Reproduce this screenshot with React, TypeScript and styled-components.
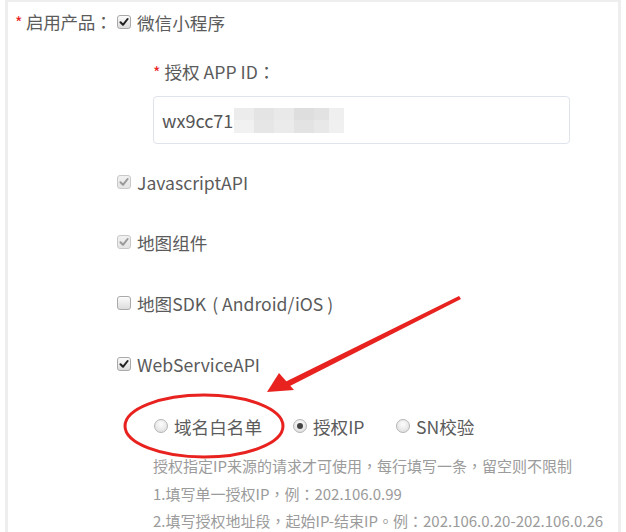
import React from "react";
import styled, { createGlobalStyle } from "styled-components";

const Global = createGlobalStyle`
  html, body { margin: 0; padding: 0; background: #fff; }
  body { font-family: "Noto Sans CJK SC", "Noto Sans", sans-serif; }
`;

const Frame = styled.div`
  position: relative;
  box-sizing: border-box;
  width: 616px;
  height: 532px;
  margin-left: 5px;
  border-style: solid;
  border-color: #eeeeee;
  border-width: 2px 3px 0 3px;
  overflow: hidden;
  padding-top: 8px;
  color: #5b5b5b;
  font-size: 17.6px;
`;

const FormRow = styled.div`
  display: flex;
  align-items: flex-start;
`;

const LabelCol = styled.div`
  width: 109px;
  flex: none;
  box-sizing: border-box;
  padding-left: 7px;
  height: 24px;
  line-height: 24px;
  white-space: nowrap;
  letter-spacing: -0.4px;
`;

const Star = styled.span`
  color: #e8231f;
  margin-right: 4px;
  font-size: 16px;
`;

const Punct = styled.span`
  font-family: "Noto Sans CJK TC", "Noto Sans CJK SC", sans-serif;
`;

const Paren = styled.span<{ $open?: boolean }>`
  margin: ${(p) => (p.$open ? "0 4px 0 6px" : "0 0 0 4px")};
`;

const ContentCol = styled.div`
  display: flex;
  flex-direction: column;
  flex: 1;
`;

const Sub = styled.div`
  padding-left: 36px;
  display: flex;
  flex-direction: column;
`;

const SubLabel = styled.div`
  margin-top: 26px;
  height: 24px;
  line-height: 24px;
  white-space: nowrap;
`;

const Input = styled.div`
  margin-top: 12px;
  box-sizing: border-box;
  width: 417px;
  height: 48px;
  border: 1px solid #dfe3eb;
  border-radius: 4px;
  display: flex;
  align-items: center;
  padding-left: 8px;
  color: #555;
  font-size: 18px;
`;

const Check = styled.label<{ $top: number }>`
  display: flex;
  align-items: center;
  height: 24px;
  margin-top: ${(p) => p.$top}px;
  gap: 6px;
  white-space: nowrap;
`;

const Box = styled.span<{ $disabled?: boolean }>`
  box-sizing: border-box;
  width: 14px;
  height: 14px;
  border-radius: 3px;
  border: 1px solid ${(p) => (p.$disabled ? "#c9c9c9" : "#a9a9a9")};
  background: ${(p) =>
    p.$disabled ? "linear-gradient(#f1f1f1, #e4e4e4)" : "linear-gradient(#fbfbfb, #dcdcdc)"};
  display: flex;
  align-items: center;
  justify-content: center;
  flex: none;
`;

const Radios = styled.div`
  display: flex;
  align-items: center;
  margin-top: 38px;
  padding-left: 37px;
  height: 24px;
`;

const RadioItem = styled.label<{ $w: number }>`
  display: flex;
  align-items: center;
  gap: 6px;
  width: ${(p) => p.$w}px;
  white-space: nowrap;
`;

const Dot = styled.span<{ $on?: boolean }>`
  box-sizing: border-box;
  width: 14px;
  height: 14px;
  border-radius: 50%;
  border: 1px solid #b5b5b5;
  background: radial-gradient(circle at 50% 35%, #fdfdfd, #d9d9d9);
  display: flex;
  align-items: center;
  justify-content: center;
  flex: none;
  &::after {
    content: "";
    display: ${(p) => (p.$on ? "block" : "none")};
    width: 6px;
    height: 6px;
    border-radius: 50%;
    background: #444;
  }
`;

const Help = styled.div`
  margin-top: 14px;
  padding-left: 36px;
  color: #9b9b9b;
  font-size: 15px;
  line-height: 27.5px;
  white-space: nowrap;
`;

const Overlay = styled.svg`
  position: absolute;
  left: -8px;
  top: -2px;
  pointer-events: none;
`;

const Mosaic = styled.svg`
  margin-left: 1px;
`;

const Tick = ({ light }: { light?: boolean }) => (
  <svg width="10" height="10" viewBox="0 0 10 10">
    <path
      d="M1.5 5.2 L4 7.8 L8.6 2"
      fill="none"
      stroke={light ? "#9a9a9a" : "#222"}
      strokeWidth="2"
      strokeLinecap="round"
      strokeLinejoin="round"
    />
  </svg>
);

const mosaic: [number, number, number, number, string][] = [
  [0, 0, 20, 12, "#ececec"],
  [20, 0, 20, 12, "#e4e4e4"],
  [40, 0, 20, 12, "#e9e9e9"],
  [60, 0, 20, 12, "#dedede"],
  [80, 0, 15, 12, "#e2e2e2"],
  [95, 0, 15, 12, "#efefef"],
  [0, 12, 20, 13, "#f1f1f1"],
  [20, 12, 20, 13, "#e6e6e6"],
  [40, 12, 20, 13, "#ebebeb"],
  [60, 12, 20, 13, "#e3e3e3"],
  [80, 12, 15, 13, "#e8e8e8"],
  [95, 12, 15, 13, "#f0f0f0"],
];

export default function App() {
  return (
    <>
      <Global />
      <Frame>
        <FormRow>
          <LabelCol>
            <Star>*</Star>启用产品<Punct>：</Punct>
          </LabelCol>
          <ContentCol>
            <Check $top={0}>
              <Box>
                <Tick />
              </Box>
              微信小程序
            </Check>
            <Sub>
              <SubLabel>
                <Star>*</Star>授权 APP ID<Punct>：</Punct>
              </SubLabel>
              <Input>
                wx9cc71
                <Mosaic width="110" height="25" viewBox="0 0 110 25">
                  {mosaic.map(([x, y, w, h, c], i) => (
                    <rect key={i} x={x} y={y} width={w} height={h} fill={c} />
                  ))}
                </Mosaic>
              </Input>
            </Sub>
            <Check $top={26}>
              <Box $disabled>
                <Tick light />
              </Box>
              JavascriptAPI
            </Check>
            <Check $top={36}>
              <Box $disabled>
                <Tick light />
              </Box>
              地图组件
            </Check>
            <Check $top={37}>
              <Box />
              <span>
                地图SDK<Paren $open>(</Paren>Android/iOS<Paren>)</Paren>
              </span>
            </Check>
            <Check $top={37}>
              <Box>
                <Tick />
              </Box>
              WebServiceAPI
            </Check>
            <Radios>
              <RadioItem $w={139}>
                <Dot />
                域名白名单
              </RadioItem>
              <RadioItem $w={103}>
                <Dot $on />
                授权IP
              </RadioItem>
              <RadioItem $w={100}>
                <Dot />
                SN校验
              </RadioItem>
            </Radios>
            <Help>
              <div>
                授权指定IP来源的请求才可使用<Punct>，</Punct>每行填写一条<Punct>，</Punct>留空则不限制
              </div>
              <div>
                1.填写单一授权IP<Punct>，</Punct>例<Punct>：</Punct>202.106.0.99
              </div>
              <div>
                2.填写授权地址段<Punct>，</Punct>起始IP-结束IP<Punct>。</Punct>例<Punct>：</Punct>
                202.106.0.20-202.106.0.26
              </div>
            </Help>
          </ContentCol>
        </FormRow>
        <Overlay width="626" height="532" viewBox="0 0 626 532">
          <ellipse
            cx="204"
            cy="426"
            rx="79"
            ry="31"
            fill="none"
            stroke="#e8231f"
            strokeWidth="3"
          />
          <polygon points="459,296 461,299 286,388 283,383" fill="#e8231f" />
          <polygon points="267,392 279,373 294,390" fill="#e8231f" />
        </Overlay>
      </Frame>
    </>
  );
}
